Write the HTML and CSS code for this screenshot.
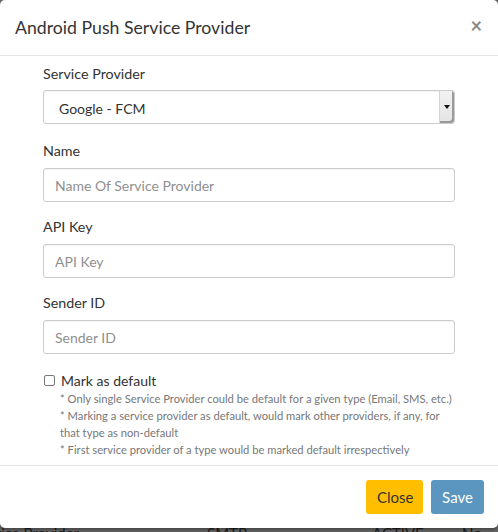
FILE: index.html
```
<!DOCTYPE html>
<html>
<head>
<meta charset="utf-8">
<link rel="stylesheet" href="styles.css">
</head>
<body>
<div class="page">
  <div class="table-row">
    <span class="c1">Service Provider</span>
    <span class="c2">SMTP</span>
    <span class="c3">ACTIVE</span>
    <span class="c4">No</span>
  </div>
</div>
<div class="modal">
  <div class="modal-header">
    <h4 class="modal-title">Android Push Service Provider</h4>
    <span class="close">&times;</span>
  </div>
  <div class="modal-body">
    <div class="form-group first">
      <label class="lbl">Service Provider</label>
      <div class="select">
        <span class="select-text">Google - FCM</span>
        <span class="select-arrow"><span class="tri"></span></span>
      </div>
    </div>
    <div class="form-group">
      <label class="lbl">Name</label>
      <input class="input" type="text" placeholder="Name Of Service Provider">
    </div>
    <div class="form-group">
      <label class="lbl">API Key</label>
      <input class="input" type="text" placeholder="API Key">
    </div>
    <div class="form-group">
      <label class="lbl">Sender ID</label>
      <input class="input" type="text" placeholder="Sender ID">
    </div>
    <div class="check-row">
      <span class="box"></span>
      <span class="check-label">Mark as default</span>
    </div>
    <div class="notes">
      <p>* Only single Service Provider could be default for a given type (Email, SMS, etc.)</p>
      <p>* Marking a service provider as default, would mark other providers, if any, for that type as non-default</p>
      <p>* First service provider of a type would be marked default irrespectively</p>
    </div>
  </div>
  <div class="modal-footer">
    <button class="btn btn-close">Close</button>
    <button class="btn btn-save">Save</button>
  </div>
</div>
</body>
</html>
```
FILE: styles.css
```
* { box-sizing: border-box; }
html, body {
  margin: 0;
  padding: 0;
  width: 498px;
  height: 532px;
  overflow: hidden;
  background: #6a6a6a;
  font-family: Lato, "Open Sans", sans-serif;
}
.page {
  padding-top: 523px;
}
.table-row {
  display: flex;
  font-size: 15px;
  line-height: 20px;
  color: #1f1f1f;
  white-space: nowrap;
}
.c1 { margin-left: -28px; width: 235px; }
.c2 { width: 165px; }
.c3 { width: 90px; }
.modal {
  position: absolute;
  left: 0;
  top: 0;
  width: 498px;
  height: 528px;
  background: #fff;
  border-radius: 5px;
  box-shadow: 0 2px 4px rgba(0,0,0,0.4);
  color: #333;
}
.modal-header {
  height: 56px;
  border-bottom: 1px solid #e5e5e5;
  display: flex;
  align-items: center;
  justify-content: space-between;
  padding: 0 15px 1px 15px;
}
.modal-title {
  margin: 0;
  font-size: 17.7px;
  font-weight: 400;
  color: #333;
}
.close {
  font-size: 20px;
  font-weight: 700;
  color: #8a8a8a;
  line-height: 1;
  margin-right: 1px;
  margin-top: -5px;
}
.modal-body {
  padding: 8px 43px 7px 43px;
}
.form-group {
  margin-bottom: 15px;
}
.form-group.first {
  margin-bottom: 17px;
}
.lbl {
  display: block;
  font-size: 14.3px;
  line-height: 20px;
  margin-bottom: 7px;
  color: #333;
}
.form-group.first .lbl { margin-bottom: 6px; }
.select {
  position: relative;
  height: 34px;
  border: 1px solid #ccc;
  border-radius: 3px;
  display: flex;
  align-items: center;
  padding-left: 15px;
  padding-top: 2px;
  box-shadow: inset 0 1px 1px rgba(0,0,0,0.05);
}
.select-text {
  font-size: 14px;
  color: #333;
}
.select-arrow {
  position: absolute;
  right: 0;
  top: 0;
  bottom: 0;
  width: 15px;
  background: linear-gradient(#f2f2f2, #e4e4e4);
  border-left: 1px solid #d5d5d5;
  box-shadow: inset -2px -2px 0 #9a9a9a;
  display: flex;
  align-items: center;
  justify-content: center;
  border-radius: 0 3px 3px 0;
}
.tri {
  width: 0;
  height: 0;
  border-left: 3px solid transparent;
  border-right: 3px solid transparent;
  border-top: 4px solid #111;
  margin-right: 1px;
}
.input {
  display: block;
  width: 100%;
  height: 34px;
  border: 1px solid #ccc;
  border-radius: 3px;
  padding: 0 11px;
  font-family: Lato, "Open Sans", sans-serif;
  font-size: 14px;
  color: #333;
  box-shadow: inset 0 1px 1px rgba(0,0,0,0.05);
  outline: none;
}
.input::placeholder { color: #8f8f8f; }
.check-row {
  display: flex;
  align-items: center;
  height: 20px;
  margin-top: 16px;
}
.box {
  width: 11px;
  height: 11px;
  border: 1px solid #777;
  border-radius: 2px;
  margin-left: 1px;
  margin-right: 6px;
  margin-top: 1px;
}
.check-label {
  font-size: 14px;
  color: #333;
}
.notes {
  padding-left: 17px;
  font-size: 11.2px;
  line-height: 17px;
  color: #777;
}
.notes p { margin: 0; }
.modal-footer {
  border-top: 1px solid #e5e5e5;
  padding: 14px 14px 13px;
  display: flex;
  justify-content: flex-end;
  gap: 8px;
}
.btn {
  height: 34px;
  border: none;
  border-radius: 3px;
  font-family: Lato, "Open Sans", sans-serif;
  font-size: 15px;
  padding: 0 11px;
}
.btn-close { background: #ffbf00; color: #333; width: 57px; }
.btn-save { background: #5a96bf; color: #fff; width: 53px; }
```
